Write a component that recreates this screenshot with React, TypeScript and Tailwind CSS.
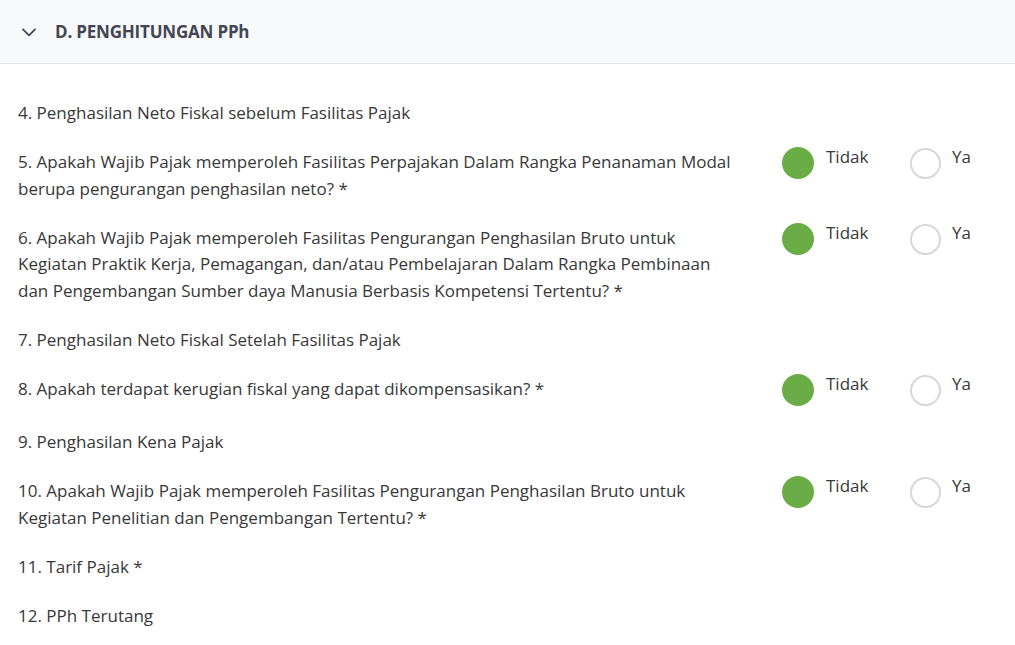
import React from "react";

type Row = { text: string[]; radio?: boolean };

const rows: Row[] = [
  { text: ["4. Penghasilan Neto Fiskal sebelum Fasilitas Pajak"] },
  {
    text: [
      "5. Apakah Wajib Pajak memperoleh Fasilitas Perpajakan Dalam Rangka Penanaman Modal",
      "berupa pengurangan penghasilan neto? *",
    ],
    radio: true,
  },
  {
    text: [
      "6. Apakah Wajib Pajak memperoleh Fasilitas Pengurangan Penghasilan Bruto untuk",
      "Kegiatan Praktik Kerja, Pemagangan, dan/atau Pembelajaran Dalam Rangka Pembinaan",
      "dan Pengembangan Sumber daya Manusia Berbasis Kompetensi Tertentu? *",
    ],
    radio: true,
  },
  { text: ["7. Penghasilan Neto Fiskal Setelah Fasilitas Pajak"] },
  { text: ["8. Apakah terdapat kerugian fiskal yang dapat dikompensasikan? *"], radio: true },
  { text: ["9. Penghasilan Kena Pajak"] },
  {
    text: [
      "10. Apakah Wajib Pajak memperoleh Fasilitas Pengurangan Penghasilan Bruto untuk",
      "Kegiatan Penelitian dan Pengembangan Tertentu? *",
    ],
    radio: true,
  },
  { text: ["11. Tarif Pajak *"] },
  { text: ["12. PPh Terutang"] },
];

function Radios() {
  return (
    <div className="flex items-start">
      <div className="flex items-start w-[128px]">
        <span className="w-[32px] h-[32px] rounded-full bg-[#6aad47] shrink-0 mt-[-2px]" />
        <span className="ml-[12px] leading-[20px] mt-[-2px]">Tidak</span>
      </div>
      <div className="flex items-start">
        <span className="w-[31px] h-[31px] rounded-full border-2 border-[#d5d7db] bg-white shrink-0 mt-[-1px]" />
        <span className="ml-[11px] leading-[20px] mt-[-2px]">Ya</span>
      </div>
    </div>
  );
}

export default function App() {
  return (
    <div
      className="w-[1015px] h-[645px] bg-white overflow-hidden text-[#383838]"
      style={{ fontFamily: '"Open Sans", "Noto Sans", sans-serif' }}
    >
      <div className="h-[64px] bg-[#f8f9fb] border-b border-[#e1e3e7] flex items-center pl-[20px]">
        <svg width="18" height="18" viewBox="0 0 24 24" fill="none" stroke="#404652" strokeWidth="2.4" strokeLinecap="round" strokeLinejoin="round">
          <path d="M4 8.5l8 8 8-8" />
        </svg>
        <span className="ml-[17px] text-[17px] font-bold text-[#404652] tracking-[-0.2px]">
          D. PENGHITUNGAN PPh
        </span>
      </div>
      <div className="pl-[18px] pt-[36px] flex flex-col gap-[22.7px] text-[17px]">
        {rows.map((r, i) => (
          <div key={i} className="flex items-start">
            <div className="w-[764px] leading-[26.5px]">
              {r.text.map((t, j) => (
                <div key={j}>{t}</div>
              ))}
            </div>
            {r.radio && <Radios />}
          </div>
        ))}
      </div>
    </div>
  );
}
